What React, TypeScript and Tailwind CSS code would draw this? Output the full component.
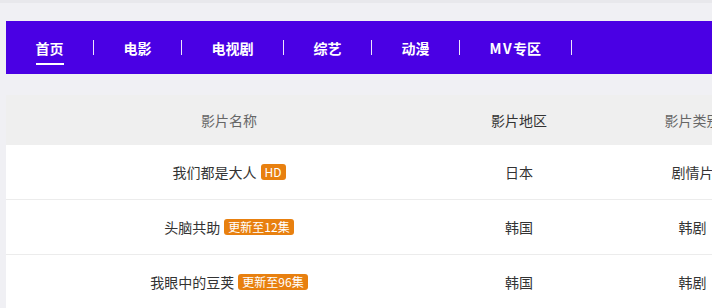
import React from "react";

const navItems = ["首页", "电影", "电视剧", "综艺", "动漫", "MV专区"];

const rows = [
  { name: "我们都是大人", badge: "HD", area: "日本", type: "剧情片" },
  { name: "头脑共助", badge: "更新至12集", area: "韩国", type: "韩剧" },
  { name: "我眼中的豆荚", badge: "更新至96集", area: "韩国", type: "韩剧" },
];

function NavLabel({ text }: { text: string }) {
  if (text.startsWith("MV")) {
    return (
      <>
        <span className="tracking-[1.5px]">MV</span>
        {text.slice(2)}
      </>
    );
  }
  return <>{text}</>;
}

export default function App() {
  return (
    <div
      className="w-[712px] h-[308px] overflow-hidden bg-[#f0f0f4] flex flex-col"
      style={{ fontFamily: '"Noto Sans CJK SC", "Noto Sans", sans-serif' }}
    >
      <div className="h-[3px] bg-[#e8e8ec] shrink-0" />
      <div className="h-[18px] shrink-0" />
      <nav className="ml-[6px] h-[53px] bg-[#4a00e4] flex items-center shrink-0">
        {navItems.map((item, i) => (
          <div key={item} className="flex items-center">
            <div className="relative px-[29.5px]">
              <span className="text-[14px] font-bold text-white leading-[20px] block whitespace-nowrap">
                <NavLabel text={item} />
              </span>
              {i === 0 && (
                <span className="absolute left-[29.5px] right-[29.5px] top-[25px] h-[2px] bg-white" />
              )}
            </div>
            <span className="w-px h-[15px] bg-white/90" />
          </div>
        ))}
      </nav>
      <div className="h-[21px] shrink-0" />
      <div className="ml-[6px] flex-1 bg-white overflow-hidden">
        <div className="flex h-[50px] bg-[#efefef] items-center text-[14px] w-[900px]">
          <div className="w-[446px] shrink-0 text-center text-[#666]">影片名称</div>
          <div className="w-[134px] shrink-0 text-center text-[#333]">影片地区</div>
          <div className="w-[213px] shrink-0 text-center text-[#666]">影片类别</div>
        </div>
        {rows.map((r) => (
          <div
            key={r.name}
            className="flex h-[55px] items-center border-b border-[#ececec] text-[14px] text-[#333] w-[900px]"
          >
            <div className="w-[446px] shrink-0 flex items-center justify-center gap-[4px]">
              <span>{r.name}</span>
              <span className="bg-[#e8800f] text-white text-[12px] leading-[16px] px-[4px] rounded-[3px]">
                {r.badge}
              </span>
            </div>
            <div className="w-[134px] shrink-0 text-center">{r.area}</div>
            <div className="w-[213px] shrink-0 text-center">{r.type}</div>
          </div>
        ))}
      </div>
    </div>
  );
}
